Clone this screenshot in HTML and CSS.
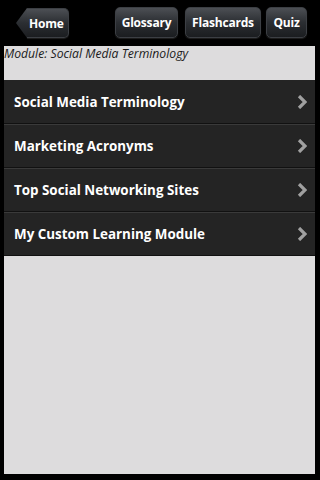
FILE: index.html
```html
<!DOCTYPE html>
<html>
<head>
<meta charset="utf-8">
<link rel="stylesheet" href="styles.css">
</head>
<body>
<header class="topbar">
  <a class="btn back">Home</a>
  <nav class="actions">
    <a class="btn w-gloss">Glossary</a>
    <a class="btn w-flash">Flashcards</a>
    <a class="btn w-quiz">Quiz</a>
  </nav>
</header>
<main class="panel">
  <p class="module">Module: Social Media Terminology</p>
  <ul class="list">
    <li class="row"><span>Social Media Terminology</span><svg class="chev" viewBox="0 0 10 14" width="10" height="14"><path d="M2 1 L8 7 L2 13" fill="none" stroke="#a0a0a0" stroke-width="3.2"/></svg></li>
    <li class="row"><span>Marketing Acronyms</span><svg class="chev" viewBox="0 0 10 14" width="10" height="14"><path d="M2 1 L8 7 L2 13" fill="none" stroke="#a0a0a0" stroke-width="3.2"/></svg></li>
    <li class="row"><span>Top Social Networking Sites</span><svg class="chev" viewBox="0 0 10 14" width="10" height="14"><path d="M2 1 L8 7 L2 13" fill="none" stroke="#a0a0a0" stroke-width="3.2"/></svg></li>
    <li class="row"><span>My Custom Learning Module</span><svg class="chev" viewBox="0 0 10 14" width="10" height="14"><path d="M2 1 L8 7 L2 13" fill="none" stroke="#a0a0a0" stroke-width="3.2"/></svg></li>
  </ul>
</main>
</body>
</html>
```

FILE: styles.css
```css
html, body {
  margin: 0;
  padding: 0;
  background: #000;
  width: 320px;
  height: 480px;
  overflow: hidden;
  font-family: "Open Sans", "DejaVu Sans", sans-serif;
}
.topbar {
  height: 46px;
  display: flex;
  align-items: flex-start;
  justify-content: space-between;
  padding: 7px 13px 0 16px;
  box-sizing: border-box;
}
.actions {
  display: flex;
  gap: 7px;
}
.actions .btn:last-child {
  margin-left: -2px;
}
.btn {
  display: flex;
  align-items: center;
  justify-content: center;
  height: 31px;
  box-sizing: border-box;
  padding: 0;
  border-radius: 5px;
  border: 1px solid #3c3f44;
  background: linear-gradient(#4c4f54, #2b2e32 50%, #1b1d20);
  color: #fff;
  font-weight: 700;
  font-size: 12px;
  box-shadow: 0 1px 1px rgba(255,255,255,0.12);
  letter-spacing: -0.2px;
}
.w-gloss { width: 63px; }
.w-flash { width: 76px; }
.w-quiz { width: 41px; }
.back {
  position: relative;
  margin-top: 1px;
  width: 42px;
  justify-content: flex-start;
  padding-left: 2px;
  border-radius: 0 5px 5px 0;
  border-left: none;
  margin-left: 11px;
  height: 30px;
}
.back::before {
  content: "";
  position: absolute;
  left: -11px;
  top: -1px;
  width: 11px;
  height: 30px;
  background: linear-gradient(#4c4f54, #2b2e32 50%, #1b1d20);
  clip-path: polygon(100% 0, 0 50%, 100% 100%);
}
.panel {
  margin: 0 5px 0 4px;
  height: 428px;
  background: #dddcdd;
}
.module {
  margin: 0;
  height: 34px;
  font-style: italic;
  font-size: 12.2px;
  color: #1a1a1a;
  line-height: 15px;
}
.list {
  list-style: none;
  margin: 0;
  padding: 0;
}
.row {
  height: 44px;
  box-sizing: border-box;
  display: flex;
  align-items: center;
  justify-content: space-between;
  padding: 0 8px 0 10px;
  background: #242424;
  border-bottom: 1px solid #111;
  box-shadow: inset 0 1px 0 #3a3a3a;
  color: #fff;
  font-weight: 700;
  font-size: 13.4px;
}
.row:first-child {
  box-shadow: none;
}
.chev {
  display: block;
}
```
